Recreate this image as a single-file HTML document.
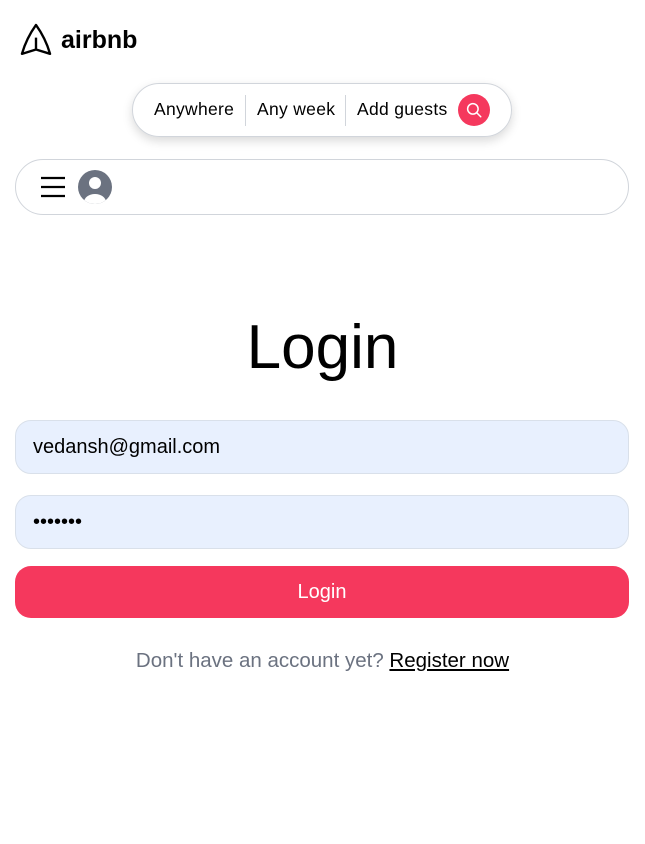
<!DOCTYPE html>
<html><head><meta charset="utf-8"><style>
*{box-sizing:border-box;margin:0;padding:0}
body{width:645px;height:844px;background:#fff;font-family:"Liberation Sans",sans-serif;color:#000;position:relative;overflow:hidden}
.logo{position:absolute;left:17px;top:21px;display:flex;align-items:center;gap:6px}
.logo span{font-weight:bold;font-size:25px}
.search{position:absolute;left:132px;top:83px;width:380px;height:54px;border:1px solid #d1d5db;border-radius:27px;box-shadow:0 4px 10px rgba(0,0,0,.15);font-size:17.5px}
.search span{position:absolute;top:15px}
.sep{position:absolute;top:11px;width:1px;height:31px;background:#d1d5db}
.sbtn{position:absolute;left:325px;top:10px;width:32px;height:32px;border-radius:50%;background:#f5385d;display:flex;align-items:center;justify-content:center}
.user{position:absolute;left:15px;top:159px;width:614px;height:56px;border:1px solid #d1d5db;border-radius:28px;display:flex;align-items:center;padding-left:24px;gap:12px}
h1{position:absolute;top:312px;width:100%;text-align:center;font-weight:normal;font-size:62px}
.inp{position:absolute;left:15px;width:614px;height:54px;border:1px solid #d9e0ea;border-radius:16px;background:#e8f0fe;font-size:20px;padding-left:17px;display:flex;align-items:center}
.btn{position:absolute;left:15px;top:566px;width:614px;height:52px;border-radius:16px;background:#f5385d;color:#fff;font-size:20px;display:flex;align-items:center;justify-content:center}
.reg{position:absolute;top:649px;width:100%;text-align:center;font-size:20.5px;color:#6b7280}
.reg u{color:#000}
</style></head><body>
<div class="logo"><svg width="38" height="38" viewBox="0 0 24 24" fill="none" stroke="#000" stroke-width="1.5" stroke-linejoin="round" style="transform:rotate(-90deg)"><path d="M6 12 3.269 3.125A59.769 59.769 0 0 1 21.485 12 59.768 59.768 0 0 1 3.27 20.875L5.999 12Zm0 0h7.5"/></svg><span>airbnb</span></div>
<div class="search"><span style="left:21px;letter-spacing:.3px">Anywhere</span><div class="sep" style="left:112px"></div><span style="left:124px;letter-spacing:.3px">Any week</span><div class="sep" style="left:212px"></div><span style="left:224px;letter-spacing:.3px">Add guests</span><div class="sbtn"><svg width="18" height="18" viewBox="0 0 24 24" fill="none" stroke="#fff" stroke-width="2" stroke-linecap="round"><circle cx="10.5" cy="10.5" r="7"/><path d="M15.5 15.5 21 21"/></svg></div></div>
<div class="user"><svg width="26" height="22" viewBox="0 0 26 22"><path d="M1 2h24M1 11h24M1 20h24" stroke="#000" stroke-width="2.2"/></svg><svg width="34" height="34" viewBox="0 0 34 34"><clipPath id="c"><circle cx="17" cy="17" r="17"/></clipPath><circle cx="17" cy="17" r="17" fill="#6b7280"/><g clip-path="url(#c)" fill="#fff"><circle cx="17" cy="13" r="6"/><ellipse cx="17" cy="32" rx="11" ry="8"/></g></svg></div>
<h1>Login</h1>
<div class="inp" style="top:420px">vedansh@gmail.com</div>
<div class="inp" style="top:495px;font-size:20px;letter-spacing:0">•••••••</div>
<div class="btn">Login</div>
<div class="reg">Don't have an account yet? <u>Register now</u></div>
</body></html>
